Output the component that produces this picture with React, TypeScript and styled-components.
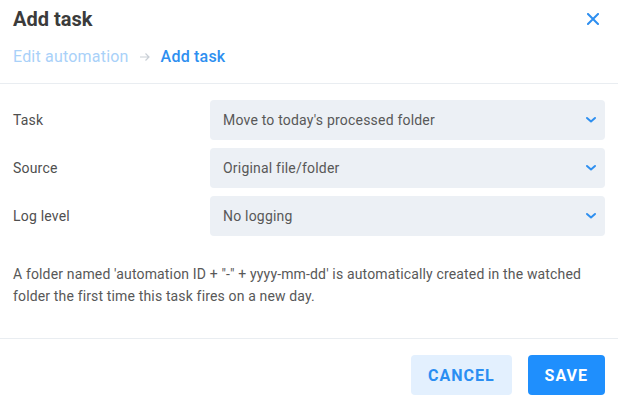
import React from 'react';
import styled, { createGlobalStyle } from 'styled-components';

const GlobalStyle = createGlobalStyle`
  html, body {
    margin: 0;
    padding: 0;
    background: #ffffff;
    font-family: Roboto, 'Liberation Sans', sans-serif;
  }
`;

const Dialog = styled.div`
  width: 618px;
  height: 406px;
  background: #fff;
  display: flex;
  flex-direction: column;
`;

const Header = styled.div`
  padding: 8px 13px 16px 13px;
  border-bottom: 1px solid #e9edf1;
`;

const TitleRow = styled.div`
  display: flex;
  align-items: center;
  justify-content: space-between;
  height: 22px;
`;

const Title = styled.h1`
  margin: 0;
  font-size: 20px;
  line-height: 22px;
  font-weight: 700;
  color: #3b3b3b;
`;

const CloseButton = styled.button`
  border: none;
  background: none;
  padding: 0;
  margin-right: 6px;
  width: 12px;
  height: 12px;
  display: flex;
  cursor: pointer;
`;

const Crumbs = styled.div`
  display: flex;
  align-items: center;
  gap: 10px;
  margin-top: 17px;
  height: 20px;
  font-size: 16px;
  line-height: 20px;
  letter-spacing: 0.2px;
`;

const Crumb = styled.span<{ $active?: boolean }>`
  color: ${(p) => (p.$active ? '#2e8ff0' : '#a9d1f9')};
  font-weight: ${(p) => (p.$active ? 500 : 400)};
`;

const Body = styled.div`
  padding: 16px 13px 0 13px;
  flex: 1;
  border-bottom: 1px solid #e9edf1;
`;

const Fields = styled.div`
  display: flex;
  flex-direction: column;
  gap: 8px;
`;

const Row = styled.div`
  display: grid;
  grid-template-columns: 197px 1fr;
  align-items: center;
`;

const Label = styled.label`
  font-size: 14px;
  letter-spacing: 0.2px;
  color: #4f4f4f;
`;

const Select = styled.div`
  height: 40px;
  border-radius: 4px;
  background: #ecf0f5;
  display: flex;
  align-items: center;
  justify-content: space-between;
  padding: 0 8px 0 13px;
  font-size: 14px;
  letter-spacing: 0.2px;
  color: #585858;
`;

const Note = styled.p`
  margin: 27px 0 0 0;
  font-size: 14px;
  line-height: 22px;
  letter-spacing: 0.15px;
  color: #585858;
`;

const Footer = styled.div`
  display: flex;
  justify-content: flex-end;
  gap: 16px;
  padding: 16px 13px 11px 13px;
`;

const Button = styled.button<{ $primary?: boolean }>`
  height: 40px;
  padding: 0 17px;
  border: none;
  border-radius: 4px;
  font-family: Roboto, 'Liberation Sans', sans-serif;
  font-size: 16px;
  font-weight: 700;
  letter-spacing: 1px;
  background: ${(p) => (p.$primary ? '#1f8ffd' : '#e3f0fe')};
  color: ${(p) => (p.$primary ? '#ffffff' : '#2a8ef2')};
  cursor: pointer;
`;

const Chevron = () => (
  <svg width="12" height="8" viewBox="0 0 12 8">
    <path d="M2 2 L6 5.5 L10 2" fill="none" stroke="#2e8ff0" strokeWidth="2" strokeLinecap="round" strokeLinejoin="round" />
  </svg>
);

const fields = [
  { label: 'Task', value: "Move to today's processed folder" },
  { label: 'Source', value: 'Original file/folder' },
  { label: 'Log level', value: 'No logging' },
];

export default function App() {
  return (
    <>
      <GlobalStyle />
      <Dialog>
        <Header>
          <TitleRow>
            <Title>Add task</Title>
            <CloseButton aria-label="Close">
              <svg width="12" height="12" viewBox="0 0 12 12">
                <path d="M1 1 L11 11 M11 1 L1 11" stroke="#2e8ff0" strokeWidth="2" strokeLinecap="square" />
              </svg>
            </CloseButton>
          </TitleRow>
          <Crumbs>
            <Crumb>Edit automation</Crumb>
            <svg width="12" height="10" viewBox="0 0 12 10">
              <path d="M1 5 H10 M6.5 1.5 L10 5 L6.5 8.5" fill="none" stroke="#c9cfd6" strokeWidth="1.2" />
            </svg>
            <Crumb $active>Add task</Crumb>
          </Crumbs>
        </Header>
        <Body>
          <Fields>
            {fields.map((f) => (
              <Row key={f.label}>
                <Label>{f.label}</Label>
                <Select>
                  <span>{f.value}</span>
                  <Chevron />
                </Select>
              </Row>
            ))}
          </Fields>
          <Note>
            A folder named 'automation ID + "-" + yyyy-mm-dd' is automatically created in the watched folder the first time this task fires on a new day.
          </Note>
        </Body>
        <Footer>
          <Button>CANCEL</Button>
          <Button $primary>SAVE</Button>
        </Footer>
      </Dialog>
    </>
  );
}
